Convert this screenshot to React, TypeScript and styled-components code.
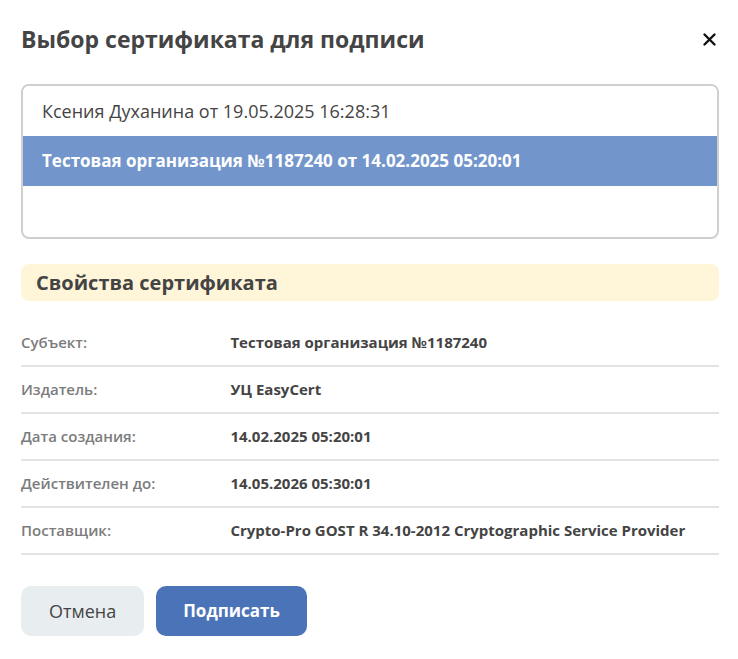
import React, { useState } from "react";
import styled, { createGlobalStyle } from "styled-components";

const GlobalStyle = createGlobalStyle`
  *, *::before, *::after { box-sizing: border-box; }
  body {
    margin: 0;
    background: #fff;
    color: #444;
    font-family: "Open Sans", sans-serif;
  }
`;

const Dialog = styled.form`
  padding: 21px 19px 23px 21px;
`;

const Header = styled.header`
  display: flex;
  align-items: center;
  justify-content: space-between;
  margin-bottom: 27px;
`;

const Title = styled.h1`
  margin: 0;
  font-size: 23px;
  line-height: 36px;
  font-weight: 700;
`;

const CloseButton = styled.button`
  display: flex;
  padding: 3px 2px;
  border: 0;
  background: none;
  color: #111;
  cursor: pointer;
`;

const CertificateList = styled.div`
  height: 155px;
  border: 2px solid #cfcfcf;
  border-radius: 8px;
  overflow: auto;
`;

const CertificateOption = styled.button<{ $selected: boolean }>`
  display: block;
  width: 100%;
  height: 50px;
  padding: 0 19px;
  border: 0;
  background: ${(p) => (p.$selected ? "#7296cc" : "#fff")};
  color: ${(p) => (p.$selected ? "#fff" : "#444")};
  font-family: inherit;
  font-size: ${(p) => (p.$selected ? 17 : 18)}px;
  line-height: 24px;
  font-weight: ${(p) => (p.$selected ? 700 : 400)};
  text-align: left;
  cursor: pointer;
`;

const SectionTitle = styled.h2`
  margin: 25px 0 18px;
  padding: 0 15px;
  border-radius: 8px;
  background: #fff5d9;
  font-size: 20px;
  line-height: 37px;
  font-weight: 700;
`;

const Properties = styled.table`
  width: 100%;
  border-collapse: collapse;
  font-size: 15px;
  line-height: 21px;
  text-align: left;
`;

const PropertyRow = styled.tr`
  height: 47px;
  border-bottom: 2px solid #e3e3e3;
`;

const PropertyName = styled.th`
  width: 30%;
  padding: 0;
  color: #7c7c7c;
  font-weight: 600;
`;

const PropertyValue = styled.td`
  padding: 0;
  font-weight: 700;
`;

const Actions = styled.footer`
  display: flex;
  gap: 12px;
  margin-top: 31px;
`;

const ActionButton = styled.button<{ $primary?: boolean }>`
  padding: 0 ${(p) => (p.$primary ? 27 : 28)}px;
  border: 0;
  border-radius: 10px;
  background: ${(p) => (p.$primary ? "#4b74b8" : "#e8edf0")};
  color: ${(p) => (p.$primary ? "#fff" : "#444")};
  font-family: inherit;
  font-size: ${(p) => (p.$primary ? 17 : 18)}px;
  line-height: 50px;
  font-weight: ${(p) => (p.$primary ? 700 : 400)};
  cursor: pointer;
`;

const certificates = [
  "Ксения Духанина от 19.05.2025 16:28:31",
  "Тестовая организация №1187240 от 14.02.2025 05:20:01",
];

const properties = [
  ["Субъект:", "Тестовая организация №1187240"],
  ["Издатель:", "УЦ EasyCert"],
  ["Дата создания:", "14.02.2025 05:20:01"],
  ["Действителен до:", "14.05.2026 05:30:01"],
  ["Поставщик:", "Crypto-Pro GOST R 34.10-2012 Cryptographic Service Provider"],
];

export default function App() {
  const [selected, setSelected] = useState(1);

  return (
    <>
      <GlobalStyle />
      <Dialog onSubmit={(e) => e.preventDefault()}>
        <Header>
          <Title>Выбор сертификата для подписи</Title>
          <CloseButton type="button" aria-label="Закрыть">
            <svg width="15" height="15" viewBox="0 0 15 15" aria-hidden="true">
              <path
                d="M2.5 2.5L12.5 12.5M12.5 2.5L2.5 12.5"
                stroke="currentColor"
                strokeWidth="2.4"
                strokeLinecap="round"
              />
            </svg>
          </CloseButton>
        </Header>
        <CertificateList role="listbox" aria-label="Сертификаты">
          {certificates.map((name, index) => (
            <CertificateOption
              key={name}
              type="button"
              role="option"
              aria-selected={selected === index}
              $selected={selected === index}
              onClick={() => setSelected(index)}
            >
              {name}
            </CertificateOption>
          ))}
        </CertificateList>
        <SectionTitle>Свойства сертификата</SectionTitle>
        <Properties>
          <tbody>
            {properties.map(([name, value]) => (
              <PropertyRow key={name}>
                <PropertyName scope="row">{name}</PropertyName>
                <PropertyValue>{value}</PropertyValue>
              </PropertyRow>
            ))}
          </tbody>
        </Properties>
        <Actions>
          <ActionButton type="button">Отмена</ActionButton>
          <ActionButton type="submit" $primary>Подписать</ActionButton>
        </Actions>
      </Dialog>
    </>
  );
}
